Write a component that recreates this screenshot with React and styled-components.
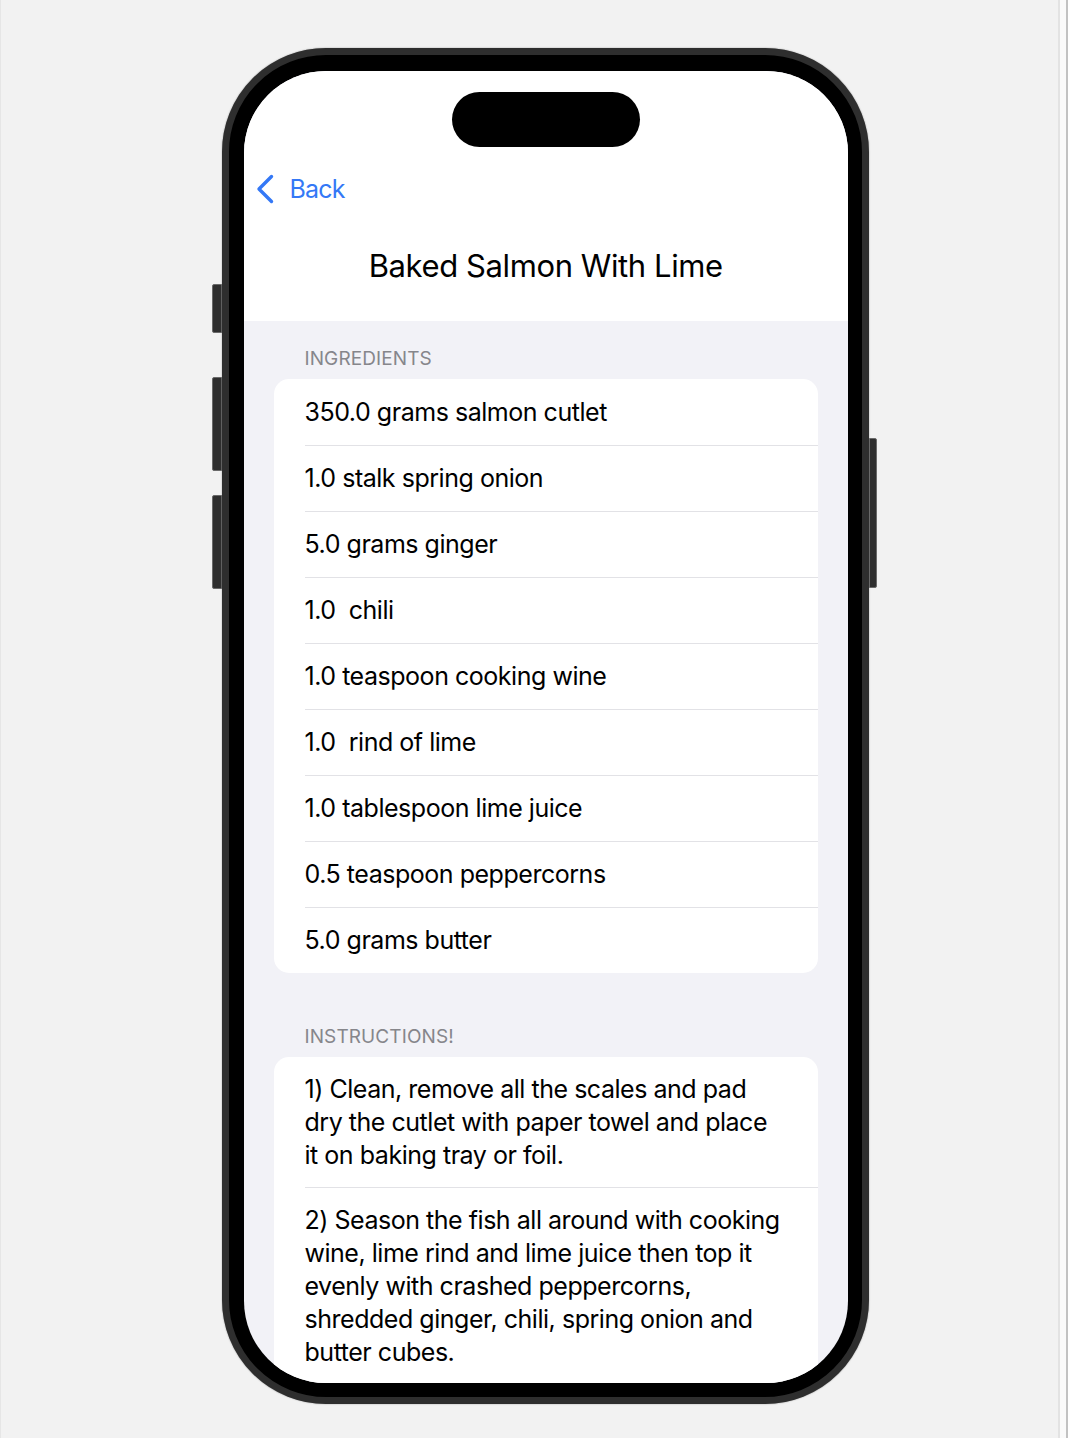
import React from "react";
import styled, { createGlobalStyle } from "styled-components";

const GlobalStyle = createGlobalStyle`
  html, body {
    margin: 0;
    padding: 0;
    background: #f2f2f2;
    font-family: Inter, "Noto Sans", "Liberation Sans", sans-serif;
    -webkit-font-smoothing: antialiased;
  }
`;

const Page = styled.div`
  display: flex;
  width: 1068px;
  height: 1438px;
  overflow: hidden;
  background: #f2f2f2;
`;

const Canvas = styled.div`
  flex: 1;
  border-left: 1px solid #e6e6e6;
  padding: 48px 0 0 211px;
`;

const RightStrip = styled.div`
  width: 6px;
  border-left: 2px solid #e3e3e3;
  border-right: 2px solid #c2c2c2;
  background: #fafafa;
`;

const PhoneRow = styled.div`
  display: flex;
  align-items: flex-start;
`;

const ButtonColumn = styled.div`
  display: flex;
  flex-direction: column;
  width: ${(p) => (p.right ? 8 : 10)}px;
  margin-top: ${(p) => p.top}px;
`;

const SideButton = styled.div`
  height: ${(p) => p.h}px;
  margin-top: ${(p) => p.gap || 0}px;
  background: #2f2f2f;
  border: 1px solid #6a6a6a;
  border-radius: ${(p) => (p.right ? "0 2px 2px 0" : "2px 0 0 2px")};
  box-sizing: border-box;
`;

const Phone = styled.div`
  width: 647px;
  height: 1356px;
  box-sizing: border-box;
  border: 7.5px solid #2e2e2e;
  border-radius: 104px;
  background: #000;
  padding: 16px 14px 14px 14.5px;
  box-shadow: 0 0 1.5px rgba(0, 0, 0, 0.45);
`;

const Screen = styled.div`
  height: 100%;
  border-radius: 82px;
  overflow: hidden;
  background: #f2f2f7;
  display: flex;
  flex-direction: column;
`;

const Header = styled.div`
  background: #fff;
  height: 250px;
  flex-shrink: 0;
  display: flex;
  flex-direction: column;
`;

const Island = styled.div`
  align-self: center;
  width: 188px;
  height: 55px;
  margin-top: 21px;
  border-radius: 28px;
  background: #000;
`;

const BackButton = styled.div`
  display: flex;
  align-items: center;
  gap: 16px;
  height: 44px;
  margin: 20px 0 0 12px;
  color: #3478f6;
  font-size: 25px;
  letter-spacing: -0.8px;
`;

const Title = styled.h1`
  margin: 35px 0 0;
  height: 40px;
  line-height: 40px;
  text-align: center;
  font-size: 31px;
  font-weight: 400;
  letter-spacing: -0.4px;
  color: #000;
`;

const Content = styled.div`
  padding: 0 30px;
`;

const SectionHeader = styled.div`
  padding: 27px 31px 0;
  height: 31px;
  line-height: 22px;
  font-size: 19px;
  color: #86868b;
  letter-spacing: 0.1px;
`;

const Card = styled.div`
  background: #fff;
  border-radius: 15px;
  margin-bottom: ${(p) => p.mb || 0}px;
`;

const Row = styled.div`
  margin-left: 31px;
  padding: ${(p) => (p.multi ? "16px 34px 15px 0" : "0 34px 0 0")};
  min-height: ${(p) => (p.multi ? "auto" : "66px")};
  display: flex;
  align-items: center;
  box-sizing: border-box;
  font-size: 25px;
  line-height: 33px;
  letter-spacing: -0.47px;
  color: #000;
  & + & {
    border-top: 1px solid #e2e2e6;
  }
`;

const ingredients = [
  "350.0 grams salmon cutlet",
  "1.0 stalk spring onion",
  "5.0 grams ginger",
  "1.0  chili",
  "1.0 teaspoon cooking wine",
  "1.0  rind of lime",
  "1.0 tablespoon lime juice",
  "0.5 teaspoon peppercorns",
  "5.0 grams butter",
];

const instructions = [
  "1) Clean, remove all the scales and pad dry the cutlet with paper towel and place it on baking tray or foil.",
  "2) Season the fish all around with cooking wine, lime rind and lime juice then top it evenly with crashed peppercorns, shredded ginger, chili, spring onion and butter cubes.",
];

function Chevron() {
  return (
    <svg width="18" height="30" viewBox="0 0 18 30" fill="none">
      <path
        d="M15.5 2.5 L3 15 L15.5 27.5"
        stroke="#3478f6"
        strokeWidth="3.4"
        strokeLinecap="round"
        strokeLinejoin="round"
      />
    </svg>
  );
}

export default function App() {
  return (
    <Page>
      <GlobalStyle />
      <Canvas>
        <PhoneRow>
          <ButtonColumn top={236}>
            <SideButton h={49} />
            <SideButton h={94} gap={44} />
            <SideButton h={94} gap={24} />
          </ButtonColumn>
          <Phone>
            <Screen>
              <Header>
                <Island />
                <BackButton>
                  <Chevron />
                  <span>Back</span>
                </BackButton>
                <Title>Baked Salmon With Lime</Title>
              </Header>
              <Content>
                <SectionHeader>INGREDIENTS</SectionHeader>
                <Card mb={26}>
                  {ingredients.map((item) => (
                    <Row key={item}>
                      <span style={{ whiteSpace: "pre" }}>{item}</span>
                    </Row>
                  ))}
                </Card>
                <SectionHeader>INSTRUCTIONS!</SectionHeader>
                <Card>
                  {instructions.map((step) => (
                    <Row key={step} multi>
                      {step}
                    </Row>
                  ))}
                </Card>
              </Content>
            </Screen>
          </Phone>
          <ButtonColumn top={390} right>
            <SideButton h={150} right />
          </ButtonColumn>
        </PhoneRow>
      </Canvas>
      <RightStrip />
    </Page>
  );
}
